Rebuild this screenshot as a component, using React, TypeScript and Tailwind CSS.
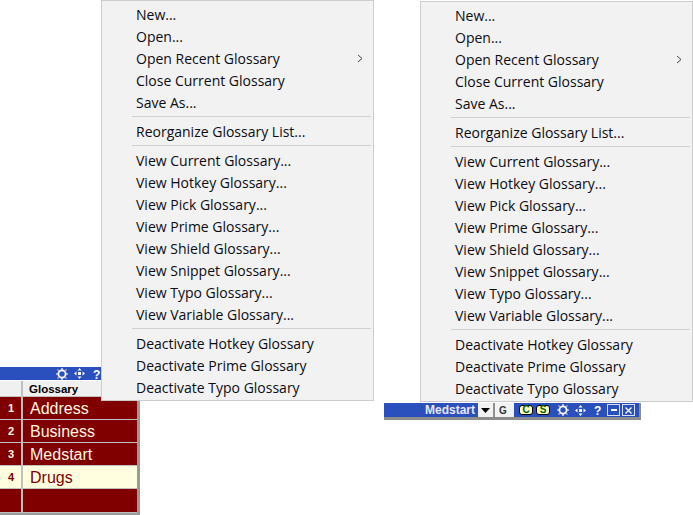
import React from 'react';

const GROUPS: string[][] = [
  ['New...', 'Open...', 'Open Recent Glossary', 'Close Current Glossary', 'Save As...'],
  ['Reorganize Glossary List...'],
  [
    'View Current Glossary...',
    'View Hotkey Glossary...',
    'View Pick Glossary...',
    'View Prime Glossary...',
    'View Shield Glossary...',
    'View Snippet Glossary...',
    'View Typo Glossary...',
    'View Variable Glossary...',
  ],
  ['Deactivate Hotkey Glossary', 'Deactivate Prime Glossary', 'Deactivate Typo Glossary'],
];

const ROWS = [
  { n: '1', label: 'Address' },
  { n: '2', label: 'Business' },
  { n: '3', label: 'Medstart' },
  { n: '4', label: 'Drugs', active: true },
  { n: '', label: '' },
];

function Menu() {
  return (
    <div className="relative z-10 h-[401px] w-[273px] border border-[#cccccc] bg-[#f2f2f2] pt-[3px] font-['Open_Sans',sans-serif] text-[14px] text-[#0c0c14]">
      {GROUPS.map((group, i) => (
        <div key={i}>
          {i > 0 && <div className="mt-[2px] mb-[4px] ml-[30px] mr-[2px] h-px bg-[#d0d0d0]" />}
          {group.map((item) => (
            <div key={item} className="flex h-[22px] items-center justify-between pl-[34px] pr-[10px] leading-none">
              <span>{item}</span>
              {item === 'Open Recent Glossary' && (
                <svg width="6" height="9" viewBox="0 0 6 9" className="mb-[2px]">
                  <path d="M1 1l4 3.5L1 8" fill="none" stroke="#444" strokeWidth="1" />
                </svg>
              )}
            </div>
          ))}
        </div>
      ))}
    </div>
  );
}

function GearIcon() {
  return (
    <svg width="12" height="12" viewBox="0 0 12 12" className="shrink-0">
      <circle cx="6" cy="6" r="3.6" fill="none" stroke="#fff" strokeWidth="1.8" />
      <path d="M6 0v2M6 10v2M0 6h2M10 6h2" stroke="#fff" strokeWidth="1.2" />
      <path d="M1.5 1.5l1.2 1.2M10.5 1.5L9.3 2.7M1.5 10.5l1.2-1.2M10.5 10.5L9.3 9.3" stroke="#e8b8e8" strokeWidth="1.2" />
    </svg>
  );
}

function MoveIcon() {
  return (
    <svg width="11" height="11" viewBox="0 0 11 11" className="shrink-0">
      <path d="M5.5 0l2 2.5h-4zM5.5 11l2-2.5h-4zM0 5.5l2.5-2v4zM11 5.5l-2.5-2v4z" fill="#fff" />
      <rect x="4" y="4" width="3" height="3" fill="#fff" />
    </svg>
  );
}

function Help() {
  return <span className="w-[7px] font-['Liberation_Sans',sans-serif] text-[12px] font-bold leading-none text-white">?</span>;
}

function GlossaryTable() {
  return (
    <div className="relative -mt-[36px] h-[150px] w-[140px] border-r-[3px] border-b-2 border-[#9a9a9a] bg-[#c0c0c0] font-['Liberation_Sans',sans-serif]">
      <div className="border-t-2 border-b border-white">
        <div className="flex h-[13px] items-center gap-[6px] bg-[#2a50bd] pl-[56px]">
          <GearIcon />
          <MoveIcon />
          <span className="ml-[2px]">
            <Help />
          </span>
        </div>
      </div>
      <div className="flex h-[16px] border-b border-[#c0c0c0] bg-[#f0f0f0]">
        <div className="w-[23px] border-r-2 border-[#c0c0c0]" />
        <div className="pl-[6px] text-[11.5px] font-bold leading-[16px] text-black">Glossary</div>
      </div>
      {ROWS.map((row, i) => (
        <div
          key={i}
          className={`flex h-[23px] border-b border-[#c0c0c0] last:border-b-0 ${row.active ? 'bg-[#ffffe0] text-[#800000]' : 'bg-[#800000] text-[#fff8e0]'}`}
        >
          <div className="flex w-[23px] items-center justify-center border-r-2 border-[#c0c0c0] pl-[1px] pt-[1px] text-[11px] font-bold">{row.n}</div>
          <div className="pl-[7px] text-[16px] leading-[24px]">{row.label}</div>
        </div>
      ))}
    </div>
  );
}

function Badge({ letter }: { letter: string }) {
  return (
    <span className="flex h-[10px] w-[14px] shrink-0 items-center justify-center rounded-[3px] border border-black bg-[#ffffc0] text-[10px] font-bold leading-none text-[#006000]">
      {letter}
    </span>
  );
}

function WinButton({ children }: { children: React.ReactNode }) {
  return <div className="flex h-[12px] w-[13px] shrink-0 items-center justify-center border border-[#d8e0f8]">{children}</div>;
}

function MedstartBar() {
  return (
    <div className="relative mt-[1px] -ml-[36px] flex h-[17px] w-[257px] items-stretch border-r-2 border-b-[3px] border-[#8c8c8c] bg-[#f2f2f2] font-['Liberation_Sans',sans-serif]">
      <div className="flex w-[94px] items-center justify-end bg-[#2a50bd] pr-[3px] text-[12px] font-bold text-[#e8e8f8]">Medstart</div>
      <svg width="9" height="5" viewBox="0 0 9 5" className="ml-[3px] self-center">
        <path d="M0 0h9L4.5 5z" fill="#000" />
      </svg>
      <div className="ml-[3px] w-[2px] bg-[#909090]" />
      <div className="ml-[4px] flex w-[8px] items-center text-[10px] font-bold text-[#333]">G</div>
      <div className="ml-[7px] flex flex-1 items-center bg-[#2a50bd] pl-[5px]">
        <Badge letter="C" />
        <span className="ml-[3px]">
          <Badge letter="S" />
        </span>
        <span className="ml-[7px] flex items-center gap-[6px]">
          <GearIcon />
          <MoveIcon />
        </span>
        <span className="ml-[8px]">
          <Help />
        </span>
        <span className="ml-[6px] flex items-center gap-[2px]">
          <WinButton>
            <div className="h-[2px] w-[6px] bg-white" />
          </WinButton>
          <WinButton>
            <svg width="7" height="7" viewBox="0 0 7 7">
              <path d="M0.5 0.5l6 6M6.5 0.5l-6 6" stroke="#fff" strokeWidth="1.3" />
            </svg>
          </WinButton>
        </span>
      </div>
    </div>
  );
}

export default function App() {
  return (
    <div className="flex h-[515px] w-[693px] overflow-hidden bg-white">
      <div className="w-[420px] shrink-0">
        <div className="ml-[101px]">
          <Menu />
        </div>
        <GlossaryTable />
      </div>
      <div className="mt-[1px]">
        <Menu />
        <MedstartBar />
      </div>
    </div>
  );
}
